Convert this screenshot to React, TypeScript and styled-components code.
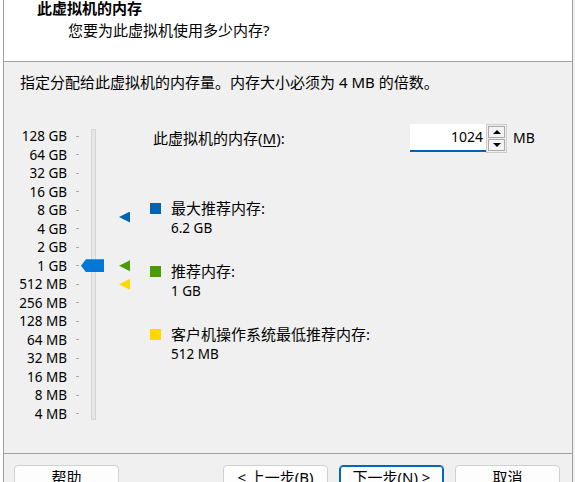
import React from 'react';
import styled, { createGlobalStyle } from 'styled-components';

const GlobalStyle = createGlobalStyle`
    html, body {
        margin: 0;
        padding: 0;
        background: #f0f0f0;
    }
    body {
        font-family: "Noto Sans", "Noto Sans CJK SC", sans-serif;
        color: #000;
    }
`;

// slider geometry
const ROW_H = 18.5;
const SCALE_TOP = 3;
const STEPS = [
    '128 GB', '64 GB', '32 GB', '16 GB', '8 GB', '4 GB', '2 GB', '1 GB',
    '512 MB', '256 MB', '128 MB', '64 MB', '32 MB', '16 MB', '8 MB', '4 MB',
];

const centerFor = (mb: number) =>
    SCALE_TOP + ROW_H / 2 + (15 - Math.log2(mb / 4)) * ROW_H;

const MARKERS = [
    { key: 'max', color: '#0063b1', mb: 6.2 * 1024 },
    { key: 'rec', color: '#4b9a0a', mb: 1024 },
    { key: 'min', color: '#ffd800', mb: 512 },
];

const LEGEND = [
    { key: 'max', color: '#0063b1', title: '最大推荐内存:', value: '6.2 GB' },
    { key: 'rec', color: '#4b9a0a', title: '推荐内存:', value: '1 GB' },
    { key: 'min', color: '#ffd800', title: '客户机操作系统最低推荐内存:', value: '512 MB' },
];

const Screen = styled.div`
    width: 575px;
    height: 482px;
    overflow: hidden;
    display: flex;
    box-sizing: border-box;
    background: #f0f0f0;
    border-left: 3px solid #fff;
`;

const Frame = styled.div`
    width: 570px;
    height: 482px;
    display: flex;
    flex-direction: column;
    box-sizing: border-box;
    border-left: 1px solid #a0a0a0;
    border-right: 1px solid #a0a0a0;
    background: #f0f0f0;
`;

const Header = styled.div`
    height: 62px;
    box-sizing: border-box;
    background: #fff;
    border-bottom: 1px solid #a0a0a0;
`;

const Title = styled.h1`
    margin: 0;
    padding-left: 33px;
    font-size: 15px;
    font-weight: 700;
    line-height: 16px;
`;

const Subtitle = styled.p`
    margin: 6px 0 0;
    padding-left: 64px;
    font-size: 15px;
    line-height: 16px;
`;

const Body = styled.div`
    flex: 1;
    padding-top: 11px;
    overflow: hidden;
`;

const Instruction = styled.p`
    margin: 0;
    padding-left: 16px;
    font-size: 15px;
    line-height: 18px;
`;

const ContentRow = styled.div`
    display: flex;
    margin-top: 33px;
`;

const SliderArea = styled.div`
    position: relative;
    width: 146px;
    display: flex;
    padding-top: ${SCALE_TOP}px;
    box-sizing: border-box;
`;

const Scale = styled.div`
    display: flex;
    flex-direction: column;
`;

const ScaleRow = styled.div`
    display: flex;
    align-items: center;
    height: ${ROW_H}px;
`;

const ScaleLabel = styled.span`
    width: 63px;
    text-align: right;
    font-size: 13.5px;
    line-height: ${ROW_H}px;
    white-space: nowrap;
`;

const Tick = styled.span`
    width: 3px;
    height: 1px;
    margin-left: 9px;
    background: #a8a8a8;
`;

const Track = styled.div`
    width: 5px;
    height: 291px;
    margin: 2px 0 0 12px;
    box-sizing: border-box;
    background: #e6e6e6;
    border: 1px solid #d6d6d6;
`;

const Thumb = styled.div`
    position: absolute;
    left: 77px;
    width: 23px;
    height: 13px;
    background: #0078d7;
    clip-path: polygon(0 50%, 5px 0, 100% 0, 100% 100%, 5px 100%);
`;

const Marker = styled.div<{ $color: string }>`
    position: absolute;
    left: 115px;
    width: 11px;
    height: 11px;
    background: ${({ $color }) => $color};
    clip-path: polygon(0 50%, 100% 0, 100% 100%);
`;

const RightPanel = styled.div`
    flex: 1;
    display: flex;
    flex-direction: column;
`;

const MemoryRow = styled.div`
    display: flex;
    align-items: flex-start;
    height: 29px;
`;

const MemLabel = styled.label`
    width: 260px;
    padding-left: 3px;
    box-sizing: border-box;
    font-size: 15px;
    line-height: 28px;

    u {
        text-decoration-thickness: 1px;
        text-underline-offset: 2px;
    }
`;

const NumberInput = styled.div`
    width: 76px;
    height: 28px;
    box-sizing: border-box;
    padding-right: 3px;
    background: #fff;
    border-bottom: 2px solid #0063b1;
    text-align: right;
    font-size: 14px;
    line-height: 25px;
`;

const SpinBox = styled.div`
    width: 21px;
    height: 29px;
    display: flex;
    flex-direction: column;
    gap: 1px;
    padding: 1px;
    box-sizing: border-box;
    border: 1px solid #cccccc;
`;

const SpinButton = styled.div`
    flex: 1;
    display: flex;
    align-items: center;
    justify-content: center;
    box-sizing: border-box;
    border: 1px solid #a8a8a8;
    background: #f3f3f3;
`;

const Arrow = styled.span<{ $down?: boolean }>`
    width: 0;
    height: 0;
    border-left: 4px solid transparent;
    border-right: 4px solid transparent;
    ${({ $down }) =>
        $down ? 'border-top: 4px solid #000;' : 'border-bottom: 4px solid #000;'}
`;

const Unit = styled.span`
    margin-left: 6px;
    font-size: 14px;
    line-height: 28px;
`;

const Legend = styled.div`
    display: flex;
    flex-direction: column;
    gap: 23px;
    margin-top: 45px;
`;

const LegendItem = styled.div`
    display: grid;
    grid-template-columns: 11px auto;
    column-gap: 10px;
`;

const Swatch = styled.span<{ $color: string }>`
    width: 11px;
    height: 11px;
    margin-top: 5px;
    background: ${({ $color }) => $color};
`;

const LegendTitle = styled.span`
    font-size: 15px;
    line-height: 20px;
`;

const LegendValue = styled.span`
    grid-column: 2;
    font-size: 13.5px;
    line-height: 20px;
`;

const Footer = styled.div`
    height: 29px;
    box-sizing: border-box;
    display: flex;
    align-items: flex-start;
    justify-content: space-between;
    padding: 11px 12px 0 10px;
    border-top: 1px solid #a0a0a0;
`;

const ButtonGroup = styled.div`
    display: flex;
    gap: 11px;
`;

const Button = styled.button<{ $focused?: boolean }>`
    flex: none;
    width: 105px;
    height: 24px;
    padding: 0;
    box-sizing: border-box;
    border-radius: 4px;
    background: #fdfdfd;
    border: 1px solid ${({ $focused }) => ($focused ? '#0067c0' : '#d0d0d0')};
    box-shadow: ${({ $focused }) => ($focused ? 'inset 0 0 0 1px #0067c0' : 'none')};
    font-family: inherit;
    font-size: 15px;
    line-height: 22px;
    color: #000;
`;

const App = () => {
    return (
        <>
            <GlobalStyle />
            <Screen>
                <Frame>
                    <Header>
                        <Title>此虚拟机的内存</Title>
                        <Subtitle>您要为此虚拟机使用多少内存?</Subtitle>
                    </Header>

                    <Body>
                        <Instruction>
                            指定分配给此虚拟机的内存量。内存大小必须为 4 MB 的倍数。
                        </Instruction>

                        <ContentRow>
                            <SliderArea>
                                <Scale>
                                    {STEPS.map((step) => (
                                        <ScaleRow key={step}>
                                            <ScaleLabel>{step}</ScaleLabel>
                                            <Tick />
                                        </ScaleRow>
                                    ))}
                                </Scale>
                                <Track />
                                {MARKERS.map((m) => (
                                    <Marker
                                        key={m.key}
                                        $color={m.color}
                                        style={{ top: centerFor(m.mb) - 5.5 }}
                                    />
                                ))}
                                <Thumb style={{ top: centerFor(1024) - 6.5 }} />
                            </SliderArea>

                            <RightPanel>
                                <MemoryRow>
                                    <MemLabel>
                                        此虚拟机的内存(<u>M</u>):
                                    </MemLabel>
                                    <NumberInput>1024</NumberInput>
                                    <SpinBox>
                                        <SpinButton>
                                            <Arrow />
                                        </SpinButton>
                                        <SpinButton>
                                            <Arrow $down />
                                        </SpinButton>
                                    </SpinBox>
                                    <Unit>MB</Unit>
                                </MemoryRow>

                                <Legend>
                                    {LEGEND.map((item) => (
                                        <LegendItem key={item.key}>
                                            <Swatch $color={item.color} />
                                            <LegendTitle>{item.title}</LegendTitle>
                                            <LegendValue>{item.value}</LegendValue>
                                        </LegendItem>
                                    ))}
                                </Legend>
                            </RightPanel>
                        </ContentRow>
                    </Body>

                    <Footer>
                        <Button>帮助</Button>
                        <ButtonGroup>
                            <Button>&lt; 上一步(B)</Button>
                            <Button $focused>下一步(N) &gt;</Button>
                            <Button>取消</Button>
                        </ButtonGroup>
                    </Footer>
                </Frame>
            </Screen>
        </>
    );
};

export default App;
